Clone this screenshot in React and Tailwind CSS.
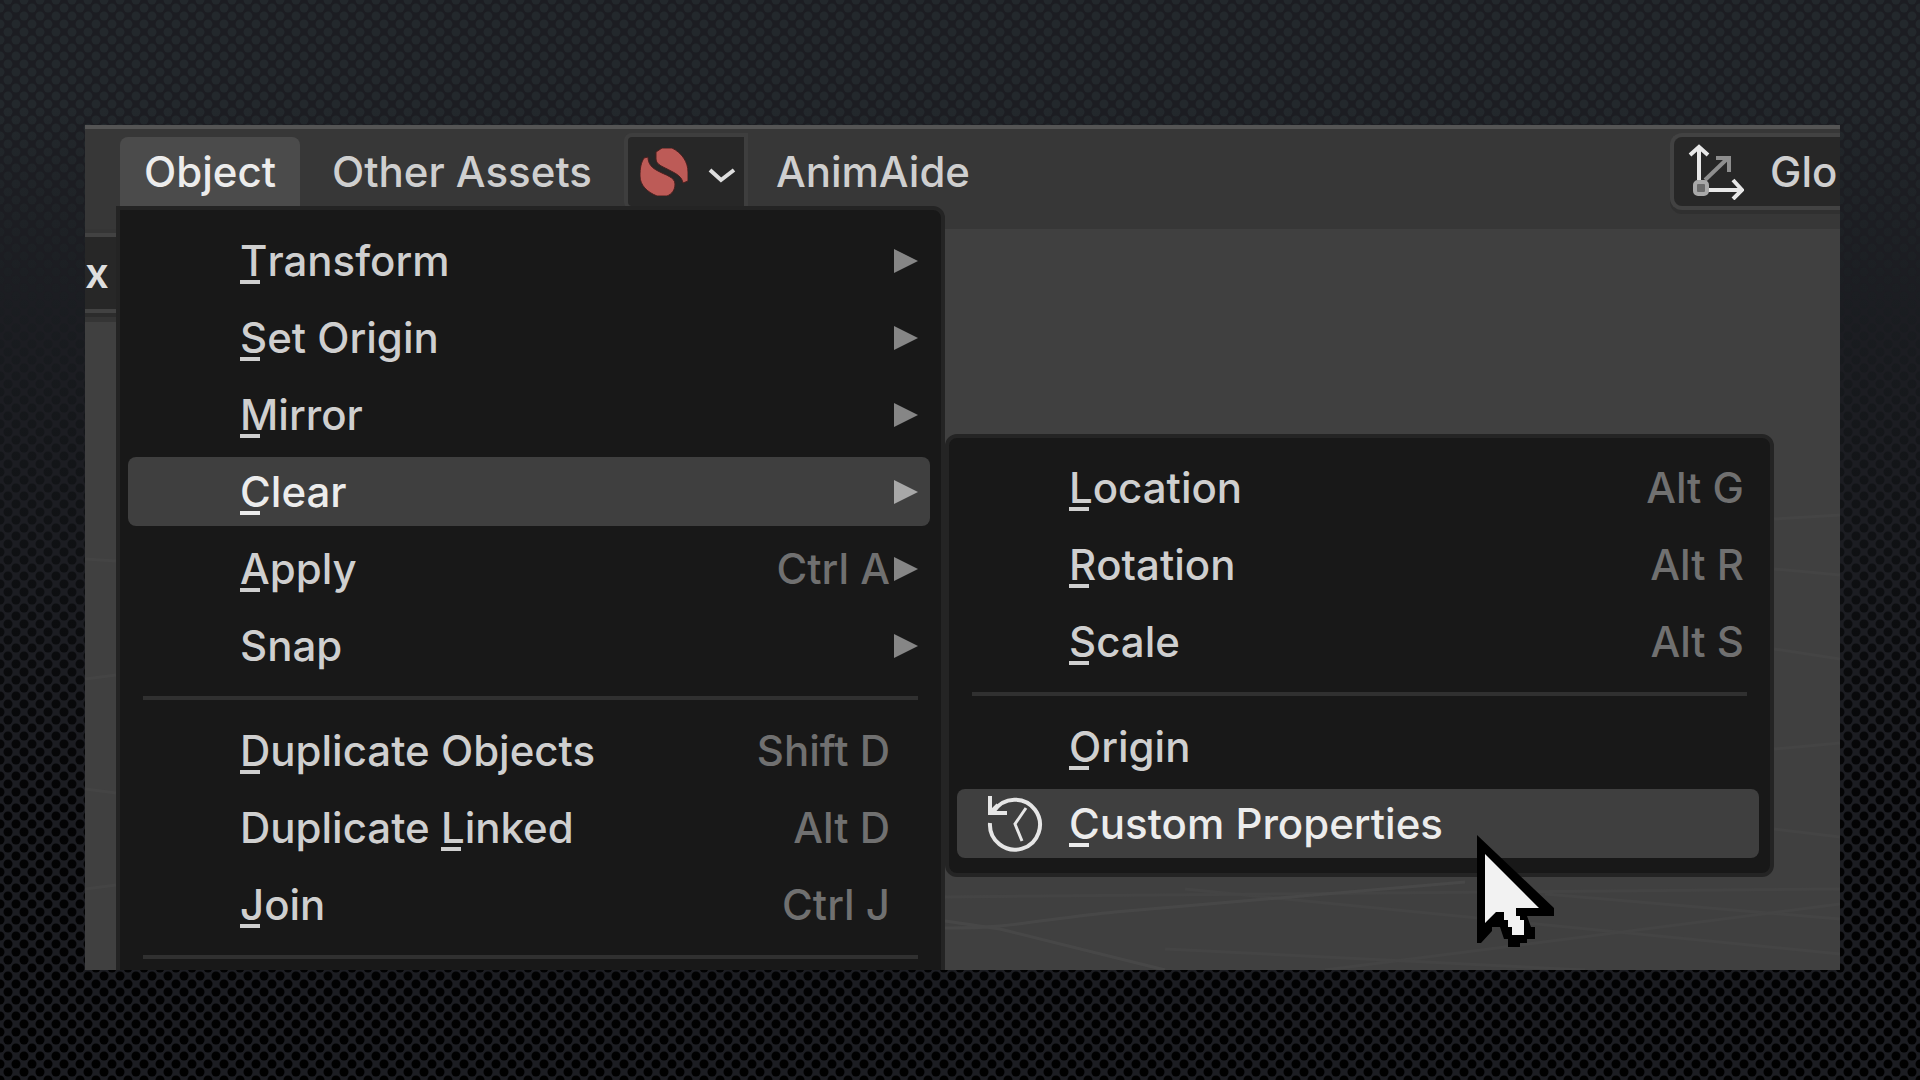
import React from "react";

const shadow = "[text-shadow:0_3px_3px_rgba(0,0,0,0.45)]";

function Backdrop() {
  return (
    <svg className="absolute inset-0 size-full" aria-hidden="true">
      <defs>
        <linearGradient id="fade" x1="0" y1="0" x2="0" y2="1">
          <stop offset="0" stopColor="#23282c" />
          <stop offset="0.1" stopColor="#23282c" />
          <stop offset="0.27" stopColor="#1b1e22" />
          <stop offset="0.75" stopColor="#030304" />
          <stop offset="1" stopColor="#000000" />
        </linearGradient>
        <pattern id="dots" width="16" height="16" patternUnits="userSpaceOnUse">
          <g fill="#fff">
            <circle cx="8" cy="0" r="4.5" />
            <circle cx="8" cy="16" r="4.5" />
            <circle cx="0" cy="8" r="4.5" />
            <circle cx="16" cy="8" r="4.5" />
          </g>
        </pattern>
        <mask id="dotMask">
          <rect width="100%" height="100%" fill="url(#dots)" />
        </mask>
      </defs>
      <rect width="100%" height="100%" fill="#1c1d22" />
      <rect width="100%" height="100%" fill="url(#fade)" mask="url(#dotMask)" />
    </svg>
  );
}

function ViewportGrid() {
  return (
    <svg
      className="absolute inset-0 size-full"
      viewBox="0 0 1755 741"
      preserveAspectRatio="none"
      aria-hidden="true"
    >
      <g stroke="#4b4b4b" strokeWidth="3" fill="none" opacity="0.7">
        <path d="M860 699 C920 700 960 690 1030 683 L1380 653" />
        <path d="M860 692 L915 700 L1080 741" />
      </g>
      <g stroke="#4a4a4a" strokeWidth="3" fill="none" opacity="0.4">
        <path d="M1100 660 L1755 725" />
        <path d="M1460 665 L1755 690" />
        <path d="M860 668 L1755 660" />
        <path d="M1240 741 L1755 675" />
        <path d="M1080 720 L1500 741" />
        <path d="M1689 290 L1755 286" />
        <path d="M1689 340 L1755 346" />
        <path d="M1689 420 L1755 430" />
        <path d="M1689 520 L1755 514" />
        <path d="M1689 600 L1755 608" />
        <path d="M0 330 L31 332" />
        <path d="M0 450 L31 446" />
        <path d="M0 560 L31 564" />
        <path d="M0 660 L31 656" />
      </g>
    </svg>
  );
}

function Arrow({ active }) {
  return (
    <svg viewBox="0 0 24 24" className={active ? "size-6 text-[#a8a8a8]" : "size-6 text-[#868686]"} aria-hidden="true">
      <path d="M0 0 L24 12 L0 24 Z" fill="currentColor" />
    </svg>
  );
}

function HistoryIcon() {
  return (
    <svg viewBox="0 0 56 70" className="h-[70px] w-14" fill="none" stroke="#e6e6e6" strokeWidth="4" aria-hidden="true">
      <path d="M7 22 A25 25 0 1 1 3 34" />
      <path d="M3 7 V24 H20" />
      <path d="M4 23 L11 16" />
      <path d="M39 19 L28 35 L35 52" strokeWidth="3" />
    </svg>
  );
}

function AxesIcon() {
  return (
    <svg viewBox="0 0 56 56" className="size-14" fill="none" aria-hidden="true">
      <path d="M17 36 L40 14" stroke="#8e8e8e" strokeWidth="4" />
      <path d="M28 14 H41 V28" stroke="#8e8e8e" strokeWidth="4" />
      <path d="M11 36 V4 M2 11 L11 3 L20 11" stroke="#e8e8e8" strokeWidth="4" />
      <path d="M18 46 H53 M45 36 L54 46 L45 55" stroke="#e8e8e8" strokeWidth="4" />
      <rect x="7" y="38" width="12" height="12" rx="3" fill="#6a6a6a" stroke="#a8a8a8" strokeWidth="4" />
    </svg>
  );
}

function BeanIcon() {
  return (
    <svg viewBox="0 0 48 48" className="size-12" aria-hidden="true">
      <g fill="#bd5b57" stroke="#4a201f" strokeWidth="1">
        <path d="M16 4 L22 0 H32 C42 5 48 14 48 24 V33 L43 35 C42 29 37 26 31 23 C24 19 16 17 16 11 Z" />
        <path d="M4 10 L8 9 C8 16 12 20 18 23 C25 27 35 29 35 36 C35 42 32 46 27 48 H17 C7 44 0 37 0 28 C0 20 1 15 4 10 Z" />
      </g>
    </svg>
  );
}

function Label({ text, mnemonic }) {
  if (mnemonic === undefined) return <span>{text}</span>;
  return (
    <span className="whitespace-pre">
      {text.slice(0, mnemonic)}
      <span className="relative">
        {text[mnemonic]}
        <span className="absolute bottom-0.5 left-0 h-1 w-5 bg-current" />
      </span>
      {text.slice(mnemonic + 1)}
    </span>
  );
}

function MenuItem({ text, mnemonic, shortcut, arrow, active, icon }) {
  return (
    <button
      type="button"
      role="menuitem"
      className={
        "mr-[11px] ml-2 flex h-[69px] items-center rounded-lg text-left " +
        (active ? "bg-[#3f3f3f] text-[#ececec]" : "text-[#cfcfcf]")
      }
    >
      <span className="flex w-28 shrink-0 justify-center pl-1">{icon}</span>
      <Label text={text} mnemonic={mnemonic} />
      <span className="ml-auto text-[#707070]">{shortcut}</span>
      <span className={arrow === undefined ? "w-[15px]" : "flex w-10 pl-1"}>{arrow && <Arrow active={active} />}</span>
    </button>
  );
}

function Divider() {
  return <hr className="mx-[23px] my-2 h-1 border-0 bg-[#303030]" />;
}

function ObjectMenu() {
  return (
    <div role="menu" className={"absolute top-[81px] left-[31px] flex w-[829px] flex-col gap-2 rounded-tr-xl border-4 border-[#242424] bg-[#181818] py-4 " + shadow}>
      <MenuItem text="Transform" mnemonic={0} arrow />
      <MenuItem text="Set Origin" mnemonic={0} arrow />
      <MenuItem text="Mirror" mnemonic={0} arrow />
      <MenuItem text="Clear" mnemonic={0} arrow active />
      <MenuItem text="Apply" mnemonic={0} shortcut="Ctrl A" arrow />
      <MenuItem text="Snap" arrow />
      <Divider />
      <MenuItem text="Duplicate Objects" mnemonic={0} shortcut="Shift D" arrow={false} />
      <MenuItem text="Duplicate Linked" mnemonic={10} shortcut="Alt D" arrow={false} />
      <MenuItem text="Join" mnemonic={0} shortcut="Ctrl J" arrow={false} />
      <Divider />
    </div>
  );
}

function ClearMenu() {
  return (
    <div role="menu" className={"absolute top-[309px] left-[860px] flex w-[829px] flex-col gap-2 rounded-xl border-4 border-[#242424] bg-[#181818] py-[15px] " + shadow}>
      <MenuItem text="Location" mnemonic={0} shortcut="Alt G" />
      <MenuItem text="Rotation" mnemonic={0} shortcut="Alt R" />
      <MenuItem text="Scale" mnemonic={0} shortcut="Alt S" />
      <Divider />
      <MenuItem text="Origin" mnemonic={0} />
      <MenuItem text="Custom Properties" mnemonic={0} active icon={<HistoryIcon />} />
    </div>
  );
}

function Cursor() {
  return (
    <svg viewBox="0 0 78 112" className="absolute top-[710px] left-[1391px] h-28 w-[78px]" aria-hidden="true">
      <path d="M1 0 L78 73 V81 H51 L55 92 H59 V104 H51 V108 H44 V112 H32 V104 L28 104 L24 92 H16 V96 L5 108 H1 Z" fill="#000" />
      <path d="M9 19 L63 73 H40 V81 H44 V85 H48 V100 H36 V92 H32 V85 H28 V77 H20 L9 88 Z" fill="#f2f2f2" />
    </svg>
  );
}

export default function App() {
  return (
    <main className="relative flex min-h-screen flex-col overflow-hidden pt-[125px] pr-20 pb-[110px] pl-[85px] font-['Inter',sans-serif] text-[42px] leading-[50px] font-medium">
      <Backdrop />
      <section className="relative flex min-w-0 grow flex-col overflow-hidden border-t-4 border-[#545454] bg-[#404040]">
        <header className={"flex h-[100px] shrink-0 items-start bg-[#373737] pt-2 pl-[35px] whitespace-nowrap text-[#cfcfcf] " + shadow}>
          <button type="button" className="h-[69px] rounded-t-lg bg-[#4b4b4b] px-6 text-[#ececec]">Object</button>
          <button type="button" className="ml-2 h-[69px] px-6">Other Assets</button>
          <button type="button" aria-label="Asset browser" className="-mt-1 ml-2 flex h-[77px] items-center gap-5 rounded-l-lg border-4 border-[#3e3e3e] bg-[#272727] pr-2 pl-3">
            <BeanIcon />
            <svg viewBox="0 0 28 16" className="h-4 w-7 translate-y-1" fill="none" stroke="#dedede" strokeWidth="4" aria-hidden="true">
              <path d="M2 2 L13 12 L26 2" />
            </svg>
          </button>
          <button type="button" className="ml-1 h-[69px] px-6">AnimAide</button>
          <button type="button" className="-mt-1 ml-auto flex h-[77px] w-[170px] shrink-0 items-center gap-[26px] overflow-hidden rounded-l-xl border-4 border-r-0 border-[#424242] bg-[#272727] pl-[14px] shadow-[0_4px_0_#303030]">
            <AxesIcon />
            <span>Glo</span>
          </button>
        </header>
        <div className="relative grow">
          <ViewportGrid />
          <div className="relative w-10 bg-[#353535] pt-1 pb-[9px]">
            <div className="flex h-20 items-center border-y-4 border-[#424242] bg-[#272727] font-semibold text-[#dedede] shadow-[0_4px_0_#2c2c2c]">x</div>
          </div>
        </div>
        <div className="absolute -top-1 left-0">
          <ObjectMenu />
          <ClearMenu />
          <Cursor />
        </div>
      </section>
    </main>
  );
}
